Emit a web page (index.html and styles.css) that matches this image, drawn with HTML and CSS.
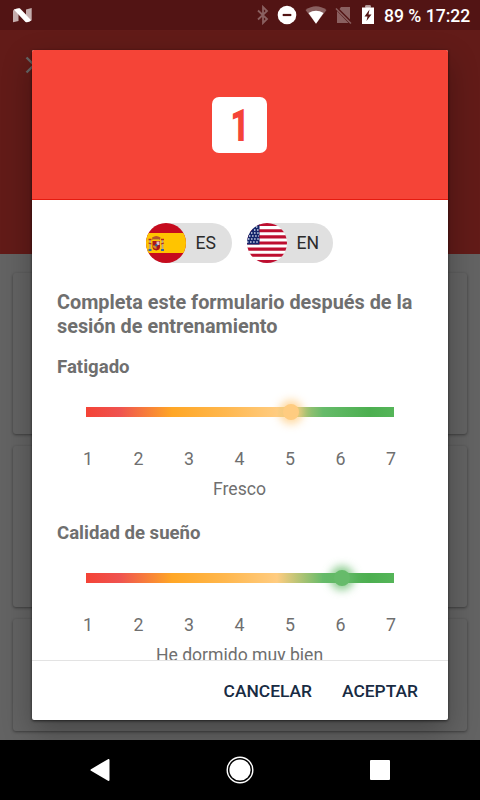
FILE: index.html
```html
<!DOCTYPE html>
<html lang="es">

<head>
    <meta charset="UTF-8">
    <meta name="viewport" content="width=device-width, initial-scale=1.0">
    <title>Formulario de entrenamiento</title>
    <link rel="stylesheet" href="styles.css">
</head>

<body>
    <div class="screen">
        <header class="status-bar">
            <svg class="logo-n" width="20" height="15" viewBox="0 0 20 15">
                <path d="M0 2.500 1.500 1 5.500 5V13L0 14.300z" fill="#c4adad" />
                <path d="M13 1.500 18.700 0V12.500L13 7z" fill="#c4adad" />
                <path d="M1 1.800Q3.500-.3 6.800.3L18.500 12.300Q15.500 14.800 12.500 14z" fill="#fff" />
            </svg>
            <div class="status-icons">
                <svg width="12" height="20" viewBox="0 0 12 20">
                    <path d="M1 5.500l9 8.500-4 4V2l4 4-9 8.500" fill="none" stroke="#8a6060" stroke-width="1.800" />
                </svg>
                <svg width="20" height="20" viewBox="0 0 20 20">
                    <circle cx="10" cy="10" r="9.300" fill="#fff" />
                    <path d="M5.700 10h8.600" stroke="#521414" stroke-width="2.200" />
                </svg>
                <svg width="22" height="20" viewBox="0 0 22 20">
                    <path d="M.5 5Q11-2.500 21.500 5L11 18.800z" fill="#8a6060" />
                    <path d="M3.500 8Q11 3.500 18.500 8L11 18.800z" fill="#fff" />
                </svg>
                <svg width="18" height="20" viewBox="0 0 18 20">
                    <path d="M6 2h9v12.500L4.500 4zM2 6l11.500 12H2z" fill="#8a6060" />
                    <path d="M1 3.500l15 15" stroke="#8a6060" stroke-width="1.500" />
                </svg>
                <svg width="14" height="20" viewBox="0 0 14 20">
                    <path d="M1 2.500h3.500V.5h5v2h3.500V19H1z" fill="#fff" />
                    <path d="M1 2.500h3.500V.5h5v2h3.500" fill="#b9a1a1" />
                    <path d="M8.500 4.500 3.500 11.500H6.500L5.500 16l5-6.500H7.500z" fill="#521414" />
                </svg>
            </div>
            <span class="status-text">89 % 17:22</span>
        </header>

        <div class="app-bar">
            <svg width="18" height="18" viewBox="0 0 18 18">
                <path d="M1.500 1.500l15 15m0-15l-15 15" stroke="#666" stroke-width="2.400" />
            </svg>
        </div>

        <main class="cards">
            <div class="card"></div>
            <div class="card"></div>
            <div class="card card-short"></div>
        </main>

        <nav class="nav-bar">
            <svg width="20" height="22" viewBox="0 0 20 22">
                <path d="M18.500 1v20L1.500 11z" fill="#fff" stroke="#fff" stroke-width="2" stroke-linejoin="round" />
            </svg>
            <svg width="28" height="28" viewBox="0 0 28 28">
                <circle cx="14" cy="14" r="12.800" fill="none" stroke="#fff" stroke-width="1.400" />
                <circle cx="14" cy="14" r="10.600" fill="#fff" />
            </svg>
            <svg width="20" height="20" viewBox="0 0 20 20">
                <rect width="20" height="20" rx="1" fill="#fff" />
            </svg>
        </nav>

        <section class="dialog">
            <div class="dialog-header">
                <div class="number"><span>1</span></div>
            </div>
            <div class="dialog-body">
                <div class="languages">
                    <div class="chip">
                        <svg width="40" height="40" viewBox="0 0 40 40">
                            <clipPath id="round"><circle cx="20" cy="20" r="20" /></clipPath>
                            <g clip-path="url(#round)">
                                <rect width="40" height="40" fill="#c60b1e" />
                                <rect y="10" width="40" height="20" fill="#ffc400" />
                                <!-- escudo -->
                                <path d="M4 17v9M16.500 17v9" stroke="#b9a68b" stroke-width="1.700" />
                                <path d="M2.500 27h3M15 27h3" stroke="#3465a4" stroke-width="1.800" />
                                <path d="M2.500 20l3 1M15 21l3-1M2.500 16.500h3M15 16.500h3" stroke="#b52a20" stroke-width="1.300" />
                                <path d="M6.500 18h7.500v6q0 3-3.700 3.500-3.800-.5-3.800-3.500z" fill="#ad1519" />
                                <path d="M10.500 18.500h3v3.500h-3z" fill="#d9c4c4" />
                                <path d="M7 22.500h3.500v3.500q-3-.5-3.500-2z" fill="#d58a2a" />
                                <circle cx="10.300" cy="22.300" r="1.200" fill="#345f9c" />
                                <path d="M6.500 17l-.5-2.500q4.300-3 8.500 0l-.5 2.500z" fill="#b5542a" />
                                <path d="M7 16.500h6.500" stroke="#d5a01c" />
                            </g>
                        </svg>
                        <span>ES</span>
                    </div>
                    <div class="chip">
                        <svg width="40" height="40" viewBox="0 0 40 40">
                            <g clip-path="url(#round)">
                                <rect width="40" height="40" fill="#fff" />
                                <path d="M0 1.500h40M0 7.700h40M0 13.850h40M0 20h40M0 26.150h40M0 32.300h40M0 38.500h40" stroke="#bd0f30" stroke-width="3.080" />
                                <rect width="12.500" height="21.500" fill="#13256b" />
                                <path d="M9 4h3M7 7h6M4 10h8M2 13h10M1 16h11M0 19h12" stroke="#d9dfef" stroke-width="1.400" stroke-dasharray="1.400 1.700" />
                            </g>
                        </svg>
                        <span>EN</span>
                    </div>
                </div>

                <h1>Completa este formulario después de la sesión de entrenamiento</h1>

                <div class="question">
                    <h2>Fatigado</h2>
                    <div class="slider">
                        <div class="thumb thumb-orange"></div>
                    </div>
                    <div class="scale">
                        <span>1</span><span>2</span><span>3</span><span>4</span><span>5</span><span>6</span><span>7</span>
                    </div>
                    <p>Fresco</p>
                </div>

                <div class="question">
                    <h2>Calidad de sueño</h2>
                    <div class="slider">
                        <div class="thumb thumb-green"></div>
                    </div>
                    <div class="scale">
                        <span>1</span><span>2</span><span>3</span><span>4</span><span>5</span><span>6</span><span>7</span>
                    </div>
                    <p>He dormido muy bien</p>
                </div>
            </div>
            <footer class="dialog-actions">
                <button>CANCELAR</button>
                <button>ACEPTAR</button>
            </footer>
        </section>
    </div>
</body>

</html>
```
FILE: styles.css
```css
* {
    margin: 0;
    padding: 0;
    box-sizing: border-box;
}

body {
    font-family: Roboto, 'Liberation Sans', sans-serif;
    overflow: hidden;
}

.screen {
    position: relative;
    width: 480px;
    height: 800px;
    display: flex;
    flex-direction: column;
    background: #636363;
    overflow: hidden;
}

.status-bar {
    height: 30px;
    flex-shrink: 0;
    display: flex;
    align-items: center;
    padding: 0 10px 0 13px;
    background: #521414;
}

.status-icons {
    display: flex;
    align-items: center;
    gap: 8px;
    margin-left: auto;
}

.status-text {
    width: 86px;
    margin-left: 9px;
    font-size: 17.6px;
    font-weight: 500;
    line-height: 30px;
    padding-top: 1px;
    color: #fff;
    white-space: nowrap;
}

.app-bar {
    height: 224px;
    flex-shrink: 0;
    padding: 26px 25px;
    background: #621b18;
}

.cards {
    flex: 1;
    display: flex;
    flex-direction: column;
    gap: 12px;
    padding: 19px 13px 0;
}

.card {
    height: 161px;
    border-radius: 3px;
    background: #636363;
    box-shadow: 0 1px 3px rgba(0, 0, 0, 0.4);
}

.card-short {
    height: 112px;
}

.nav-bar {
    height: 60px;
    display: flex;
    align-items: center;
    justify-content: space-between;
    padding: 0 90px;
    background: #000;
    z-index: 2;
}

.dialog {
    position: absolute;
    left: 32px;
    top: 50px;
    width: 416px;
    height: 670px;
    display: flex;
    flex-direction: column;
    border-radius: 2px;
    background: #fff;
    box-shadow: 0 12px 30px rgba(0, 0, 0, 0.3), 0 1px 3px rgba(0, 0, 0, 0.6);
    overflow: hidden;
}

.dialog-header {
    height: 150px;
    flex-shrink: 0;
    display: flex;
    align-items: center;
    justify-content: center;
    padding-right: 1px;
    background: #f54437;
    border-bottom: 1px solid #e51b10;
}

.number {
    width: 55px;
    height: 56px;
    border-radius: 7px;
    background: #fff;
    color: #f54437;
    font-size: 44px;
    font-weight: 900;
    line-height: 58px;
    text-align: center;
}

.number span {
    display: inline-block;
    transform: scaleX(0.75);
}

.dialog-body {
    height: 460px;
    padding: 23px 25px 0;
    overflow: hidden;
    color: #6f6f6f;
}

.languages {
    display: flex;
    justify-content: center;
    gap: 15px;
    margin-bottom: 28px;
    padding-right: 2px;
}

.chip {
    width: 86px;
    height: 40px;
    display: flex;
    align-items: center;
    gap: 10px;
    border-radius: 20px;
    background: #e0e0e0;
    color: #2b2b2b;
    font-size: 17.6px;
}

h1 {
    font-size: 19.85px;
    font-weight: 700;
    line-height: 24px;
}

h2 {
    font-size: 18.6px;
    font-weight: 700;
    line-height: 22px;
}

.question {
    height: 166px;
    padding-top: 17px;
}

.slider {
    position: relative;
    width: 308px;
    height: 10px;
    margin: 29px 0 0 29px;
    background: linear-gradient(90deg, #f44336 0%, #ef5350 11%, #ffa726 28%, #ffb74d 45%, #ffcc80 62%, #66bb6a 77%, #4caf50 92%, #55b559 100%);
}

.thumb {
    position: absolute;
    top: -3px;
    width: 16px;
    height: 16px;
    border-radius: 50%;
}

.thumb-orange {
    left: 197px;
    background: #ffcc80;
    box-shadow: 0 0 9px 4px rgba(255, 204, 128, 0.75);
}

.thumb-green {
    left: 248px;
    background: #66bb6a;
    box-shadow: 0 0 9px 4px rgba(102, 187, 106, 0.75);
}

.scale {
    display: flex;
    justify-content: space-between;
    width: 313px;
    margin: 31px 0 0 26px;
    font-size: 17.8px;
    line-height: 22px;
}

.question p {
    margin-top: 8px;
    padding-right: 1px;
    font-size: 17.6px;
    line-height: 22px;
    text-align: center;
}

.dialog-actions {
    height: 60px;
    display: flex;
    justify-content: flex-end;
    gap: 30px;
    padding-right: 30px;
    border-top: 1px solid #e3e3e3;
}

.dialog-actions button {
    border: none;
    background: none;
    font: 500 17.4px Roboto, sans-serif;
    color: #182b43;
}
```
